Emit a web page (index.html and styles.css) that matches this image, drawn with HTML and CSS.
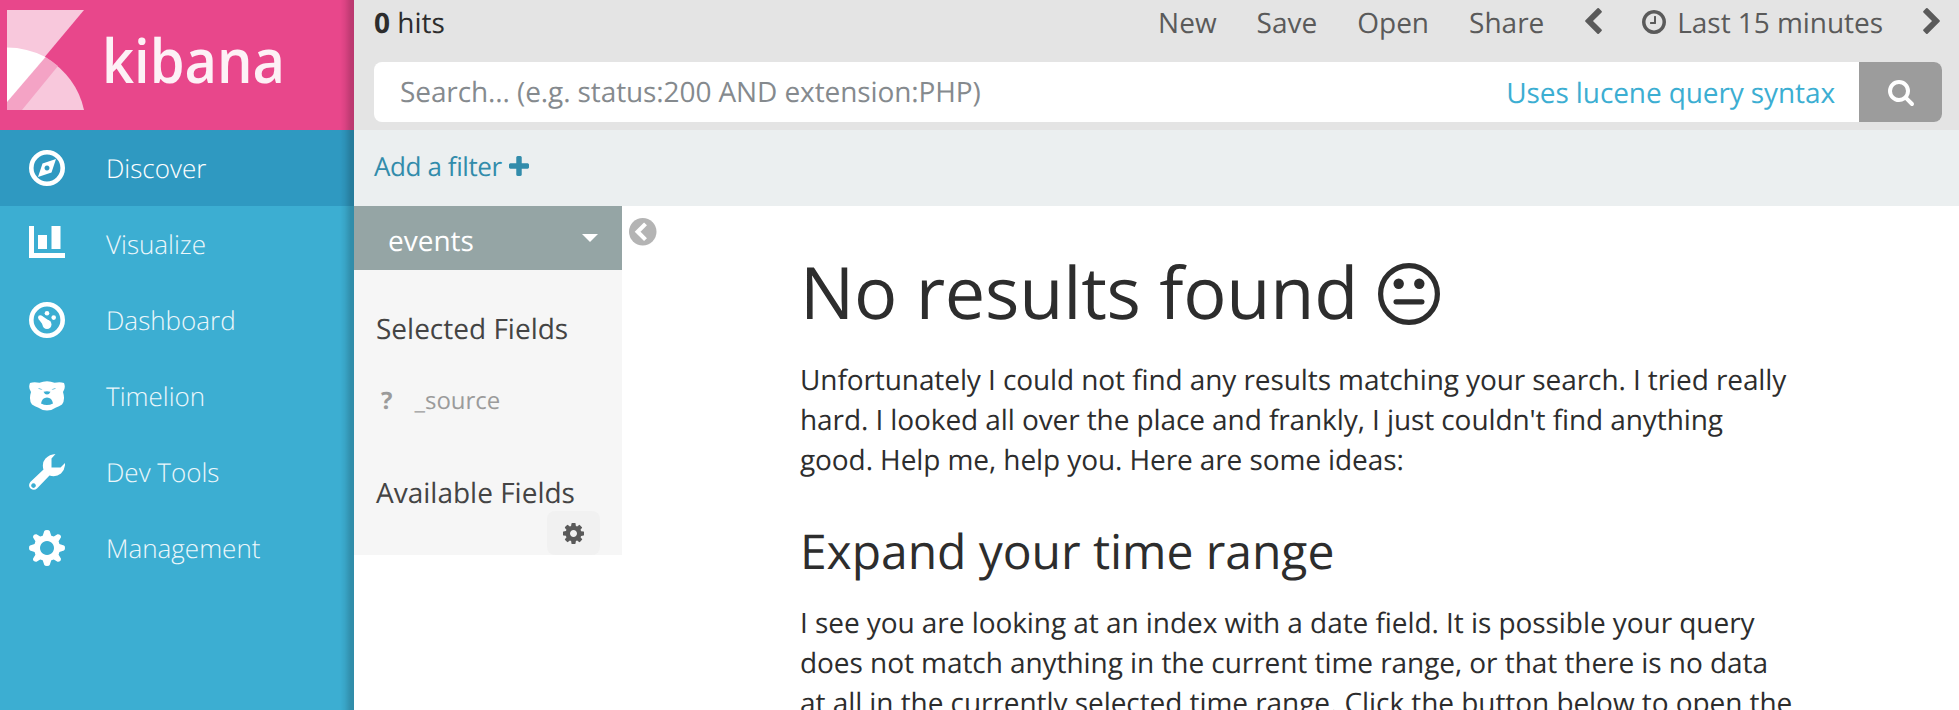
FILE: index.html
```html
<!DOCTYPE html>
<html lang="en">
<head>
<meta charset="utf-8">
<title>Kibana</title>
<link rel="stylesheet" href="styles.css">
</head>
<body>
<div class="app">
  <nav class="sidebar">
    <a class="brand">
      <svg class="brand-mark" viewBox="0 0 77 100">
        <path fill="#f8c8dc" d="M0 0H77L0 92Z"/>
        <path fill="#f8c8dc" d="M38 47Q70 67 77 100H0V92Z"/>
        <path fill="#f4a3c5" d="M0 92L38.500 47Q45 51 51 56L15 100H0Z"/>
        <path fill="#fff" d="M0 37.500Q20 37.500 38.500 47L0 92Z"/>
      </svg>
      <svg class="brand-name" viewBox="0 0 180 60"><text x="-4" y="52.500" textLength="183" lengthAdjust="spacingAndGlyphs">kibana</text></svg>
    </a>
    <a class="item active">
      <svg class="icon" viewBox="0 0 36 36"><circle cx="18" cy="18" r="15.700" fill="none" stroke="#fff" stroke-width="4.600"/><path fill="#fff" fill-rule="evenodd" d="M27 9L22.500 22.500L9 27L13.500 13.500ZM18 15.500a2.500 2.500 0 1 0 .01 0Z"/></svg>
      <span>Discover</span>
    </a>
    <a class="item">
      <svg class="icon" viewBox="0 0 36 36"><path fill="#fff" d="M0 0H5V27H36V32H0ZM9 9H18V23H9ZM22.500 0H31.500V23H22.500Z"/></svg>
      <span>Visualize</span>
    </a>
    <a class="item">
      <svg class="icon" viewBox="0 0 36 36"><circle cx="18" cy="18" r="15.700" fill="none" stroke="#fff" stroke-width="4.600"/><g fill="#fff"><circle cx="18" cy="11.300" r="2.300"/><circle cx="24.700" cy="15.600" r="2.300"/><circle cx="11.300" cy="15.600" r="2.300"/><circle cx="18" cy="22.500" r="4.500"/><path d="M9.700 17.200L12.800 13.800L21 19.200L15.500 25Z"/></g></svg>
      <span>Dashboard</span>
    </a>
    <a class="item">
      <svg class="icon" viewBox="0 0 36 36"><path fill="#fff" fill-rule="evenodd" d="M1 5Q5 3.500 10.500 4.800Q14 3.200 18 3.200T25.500 4.800Q31 3.500 35 5Q37 10 34 14Q36.500 22 33 26.500Q30 28.500 27 29.500Q23 32.500 18 32.500T9 29.500Q6 28.500 3 26.500Q-.5 22 2 14Q-1 10 1 5ZM9 10Q10 12 13.500 11.300ZM27 10Q26 12 22.500 11.300ZM14.500 13.800Q18 12.500 21.500 13.800Q20.500 16.500 18 16.500T14.500 13.800ZM12 25.500Q13 19.500 18 19.500T24 25.500Q21 27 18 27T12 25.500Z"/></svg>
      <span>Timelion</span>
    </a>
    <a class="item">
      <svg class="icon" viewBox="0 0 36 36"><path fill="#fff" fill-rule="evenodd" d="M26.500 0L22.500 4.500V13.500H31.500L36 9Q36.500 15 32 19.500Q27 23.500 20.500 21.500L8 34.500Q5 37 1.500 34.500Q-1.300 31.500 1.300 28L14.500 15.500Q12.500 9 16.500 4.500Q20.500 .3 26.500 0ZM4.500 29.300A2.300 2.300 0 1 0 4.510 29.300Z"/></svg>
      <span>Dev Tools</span>
    </a>
    <a class="item">
      <svg class="icon" viewBox="0 0 36 36"><path fill="#fff" fill-rule="evenodd" d="M15.300 1Q15.800 0 18 0T20.700 1L22.300 5.800L24.800 6.500L28.500 4.200Q30 4 31.200 5T31.900 7.500L29.600 11.200L30.400 13.900L35 15.600Q36 16 36 18T35 20.400L30.400 22.100L29.600 24.800L31.900 28.500Q32.200 30 31.200 31T28.500 31.800L24.800 29.500L22.300 30.200L20.700 35Q20.200 36 18 36T15.300 35L13.700 30.200L11.200 29.500L7.500 31.800Q6 32 4.800 31T4.100 28.500L6.400 24.800L5.600 22.100L1 20.400Q0 20 0 18T1 15.600L5.600 13.900L6.400 11.200L4.100 7.500Q3.800 6 4.800 5T7.500 4.200L11.200 6.500L13.700 5.800ZM18 11A7 7 0 1 0 18.010 11Z"/></svg>
      <span>Management</span>
    </a>
  </nav>

  <main class="main">
    <header class="topbar">
      <div class="toprow">
        <div class="hits"><b>0</b> hits</div>
        <div class="menu">
          <a>New</a><a>Save</a><a>Open</a><a class="share">Share</a>
          <a><svg class="chevron" viewBox="410 26 1036 1612"><path d="M1427 301l-531 531 531 531q19 19 19 45t-19 45l-166 166q-19 19-45 19t-45-19l-742-742q-19-19-19-45t19-45l742-742q19-19 45-19t45 19l166 166q19 19 19 45t-19 45z"/></svg></a>
          <a class="time"><svg class="clock" viewBox="128 128 1536 1536"><path d="M1024 544v448q0 14-9 23t-23 9h-320q-14 0-23-9t-9-23v-64q0-14 9-23t23-9h224v-352q0-14 9-23t23-9h64q14 0 23 9t9 23zm416 352q0-148-73-273t-198-198-273-73-273 73-198 198-73 273 73 273 198 198 273 73 273-73 198-198 73-273zm224 0q0 209-103 385.500t-279.500 279.500-385.500 103-385.500-103-279.500-279.500-103-385.500 103-385.500 279.500-279.500 385.500-103 385.500 103 279.500 279.500 103 385.500z"/></svg>Last 15 minutes</a>
          <a><svg class="chevron" viewBox="346 26 1036 1612"><path d="M1363 877l-742 742q-19 19-45 19t-45-19l-166-166q-19-19-19-45t19-45l531-531-531-531q-19-19-19-45t19-45l166-166q19-19 45-19t45 19l742 742q19 19 19 45t-19 45z"/></svg></a>
        </div>
      </div>
      <div class="search">
        <span class="placeholder">Search... (e.g. status:200 AND extension:PHP)</span>
        <a class="lucene">Uses lucene query syntax</a>
        <button class="go"><svg viewBox="64 128 1664 1664"><path d="M1216 832q0-185-131.500-316.500t-316.500-131.500-316.500 131.500-131.500 316.500 131.500 316.500 316.500 131.500 316.500-131.500 131.500-316.500zm512 832q0 52-38 90t-90 38q-54 0-90-38l-343-342q-179 124-399 124-143 0-273.500-55.500t-225-150-150-225-55.500-273.500 55.500-273.500 150-225 225-150 273.500-55.500 273.500 55.500 225 150 150 225 55.500 273.500q0 220-124 399l343 343q37 37 37 90z"/></svg></button>
      </div>
    </header>
    <div class="filters">
      <a>Add a filter</a>
      <svg class="plus" viewBox="192 128 1408 1408"><path d="M1600 736v192q0 40-28 68t-68 28h-416v416q0 40-28 68t-68 28h-192q-40 0-68-28t-28-68v-416h-416q-40 0-68-28t-28-68v-192q0-40 28-68t68-28h416v-416q0-40 28-68t68-28h192q40 0 68 28t28 68v416h416q40 0 68 28t28 68z"/></svg>
    </div>
    <div class="content">
      <aside class="fields">
        <div class="index"><span>events</span><i class="caret"></i></div>
        <h5 class="fields-title">Selected Fields</h5>
        <div class="field"><b>?</b><span>_source</span></div>
        <h5 class="fields-title available">Available Fields</h5>
        <button class="settings"><svg viewBox="128 128 1536 1536"><path d="M1152 896q0-106-75-181t-181-75-181 75-75 181 75 181 181 75 181-75 75-181zm512-109v222q0 12-8 23t-20 13l-185 28q-19 54-39 91 35 50 107 138 10 12 10 25t-9 23q-27 37-99 108t-94 71q-12 0-26-9l-138-108q-44 23-91 38-16 136-29 186-7 28-36 28h-222q-14 0-24.500-8.500t-11.500-21.500l-28-184q-49-16-90-37l-141 107q-10 9-25 9-14 0-25-11-126-114-165-168-7-10-7-23 0-12 8-23 15-21 51-66.500t54-70.500q-27-50-41-99l-183-27q-13-2-21-12.500t-8-23.500v-222q0-12 8-23t19-13l186-28q14-46 39-92-40-57-107-138-10-12-10-24 0-10 9-23 26-36 98.500-107.500t94.500-71.500q13 0 26 10l138 107q44-23 91-38 16-136 29-186 7-28 36-28h222q14 0 24.500 8.500t11.500 21.500l28 184q49 16 90 37l142-107q9-9 24-9 13 0 25 10 129 119 165 170 7 8 7 22 0 12-8 23-15 21-51 66.500t-54 70.500q26 50 41 98l183 28q13 2 21 12.500t8 23.500z"/></svg></button>
      </aside>
      <svg class="collapse" viewBox="0 0 28 28"><circle cx="14" cy="14" r="14" fill="#b4b4b4"/><path d="M16.800 6L8.800 14L16.800 22" fill="none" stroke="#fff" stroke-width="4.200"/></svg>
      <article class="results">
        <h1>No results found <svg class="meh" viewBox="0 0 62 62"><circle cx="31" cy="31" r="28.400" fill="none" stroke="#2d2d2d" stroke-width="5.200"/><g fill="#2d2d2d"><circle cx="20.700" cy="20.700" r="5.200"/><circle cx="41.300" cy="20.700" r="5.200"/><rect x="15.500" y="36.200" width="31" height="5.200" rx="2.600"/></g></svg></h1>
        <p class="lead">Unfortunately I could not find any results matching your search. I tried really hard. I looked all over the place and frankly, I just couldn't find anything good. Help me, help you. Here are some ideas:</p>
        <h3>Expand your time range</h3>
        <p>I see you are looking at an index with a date field. It is possible your query does not match anything in the current time range, or that there is no data at all in the currently selected time range. Click the button below to open the</p>
      </article>
    </div>
  </main>
</div>
</body>
</html>
```
FILE: styles.css
```css
* { box-sizing: border-box; }
body {
  margin: 0;
  overflow: hidden;
  background: #fff;
  color: #2d2d2d;
  font: 28px/40px "Open Sans", sans-serif;
  text-rendering: geometricPrecision;
}
svg { display: block; flex: none; }
button { border: 0; padding: 0; font: inherit; }
.app { display: flex; height: 710px; overflow: hidden; }

.sidebar {
  position: relative;
  flex: 0 0 354px;
  background: #3caed2;
}
.sidebar::after {
  content: "";
  position: absolute;
  top: 0;
  right: 0;
  bottom: 0;
  width: 14px;
  background: linear-gradient(to right, rgba(0,0,0,0), rgba(0,0,0,.06) 35%, rgba(0,0,0,.18) 75%, rgba(0,0,0,.2));
}
.brand {
  display: flex;
  height: 130px;
  padding: 10px 0 0 7px;
  background: #e8478b;
}
.brand-mark { width: 77px; height: 100px; }
.brand-name { width: 180px; height: 60px; margin: 20px 0 0 22px; overflow: visible; }
.brand-name text { font: 600 61px "Open Sans", sans-serif; fill: #fdf1f6; }
.item {
  display: flex;
  align-items: center;
  height: 76px;
  padding-left: 29px;
  font-size: 26px;
  font-weight: 300;
  color: #ecf7fb;
}
.item.active { background: #2f99c1; color: #fff; }
.icon { width: 36px; height: 36px; }
.item span { margin: 0 0 1px 41px; }

.main { flex: 1; min-width: 0; }
.topbar { height: 130px; padding: 0 17px 0 20px; background: #e4e4e4; }
.toprow {
  display: flex;
  justify-content: space-between;
  height: 62px;
  padding: 3px 2px 0 0;
}
.menu { display: flex; gap: 40px; color: #5a5a5a; fill: #5a5a5a; }
.menu a { display: flex; }
.share { margin-right: 1px; }
.time { letter-spacing: -.05px; }
.chevron { width: 17px; height: 26px; margin-top: 5px; }
.clock { width: 24px; height: 24px; margin: 7px 11px 0 0; }
.search {
  display: flex;
  align-items: center;
  height: 60px;
  padding-left: 26px;
  overflow: hidden;
  border-radius: 8px;
  background: #fff;
}
.placeholder { flex: 1; color: #858a8e; letter-spacing: -.1px; }
.lucene { margin: 2px 24px 0 0; color: #3caed2; letter-spacing: -.1px; }
.go {
  display: flex;
  align-items: center;
  justify-content: center;
  width: 83px;
  height: 60px;
  padding-top: 2px;
  background: #9c9c9c;
  fill: #fff;
}
.go svg { width: 26px; height: 26px; }
.filters {
  display: flex;
  align-items: center;
  gap: 7px;
  height: 76px;
  padding: 0 0 5px 20px;
  background: #ebeff0;
  color: #328cab;
  font-size: 26px;
  letter-spacing: -.4px;
}
.plus { width: 20px; height: 20px; margin-top: 1px; fill: currentColor; }

.content { display: flex; align-items: flex-start; }
.fields { display: flex; flex-direction: column; flex: none; width: 268px; height: 349px; background: #f6f6f6; }
.index {
  display: flex;
  flex: none;
  align-items: center;
  justify-content: space-between;
  height: 64px;
  padding: 6px 24px 0 34px;
  background: #95a5a5;
  color: #fff;
}
.caret { border: 8px solid transparent; border-top-color: #fff; border-bottom: 0; margin-bottom: 6px; }
.fields-title { margin: 39px 0 0 22px; font-size: 28px; font-weight: 400; color: #444; }
.field { display: flex; gap: 22px; margin: 32px 0 0 27px; font-size: 24px; color: #9b9b9b; }
.fields-title.available { margin-top: 52px; }
.settings {
  display: flex;
  flex: none;
  align-items: center;
  justify-content: center;
  align-self: flex-end;
  width: 53px;
  height: 44px;
  margin: -2px 22px 0 0;
  border-radius: 8px;
  background: #f1f1f1;
}
.settings svg { width: 21px; height: 21px; fill: #5a5a5a; }
.collapse { width: 27.500px; height: 27.500px; margin: 12px 0 0 7px; }
.results { flex: none; width: 1000px; margin-left: 143.500px; }
.results h1 {
  display: flex;
  gap: 20px;
  margin: 46px 0 0;
  font-size: 72px;
  font-weight: 400;
  line-height: 80px;
  letter-spacing: -.2px;
}
.meh { width: 62px; height: 62px; margin-top: 11px; }
.results p { margin: 25px 0 0; letter-spacing: -.06px; }
.results .lead { margin-top: 28px; letter-spacing: -.09px; }
.results h3 { margin: 46px 0 0; font-size: 48px; font-weight: 400; line-height: 52px; letter-spacing: -.05px; }
```
